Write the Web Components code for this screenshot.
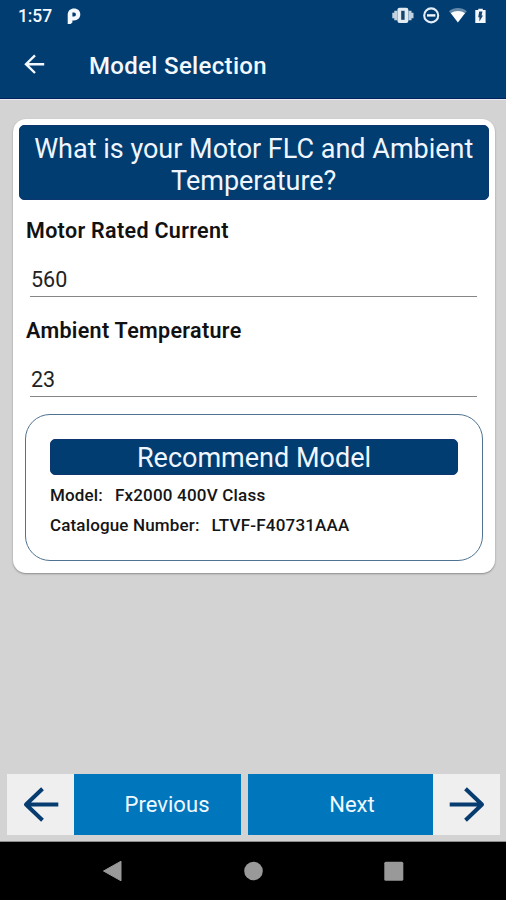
<!DOCTYPE html>
<html lang="en">
<head>
<meta charset="UTF-8">
<meta name="viewport" content="width=device-width, initial-scale=1">
<title>Model Selection</title>
<style>
  :root {
    --navy: #013d70;
    --blue: #0076bd;
    --page: #d3d3d3;
  }
  body {
    margin: 0;
    background: var(--page);
    font-family: Roboto, "Liberation Sans", sans-serif;
  }
</style>
</head>
<body>
<model-app></model-app>

<script>
class StatusBar extends HTMLElement {
  connectedCallback() {
    this.attachShadow({ mode: 'open' });
    this.shadowRoot.innerHTML = `
      <style>
        :host {
          display: flex;
          align-items: center;
          justify-content: space-between;
          height: 32px;
          padding: 0 19px 0 18px;
          background: var(--navy);
          color: #f4f8ff;
        }
        div {
          display: flex;
          align-items: center;
        }
        .time {
          width: 49px;
          font-size: 17.500px;
          line-height: 32px;
          font-weight: 500;
          letter-spacing: -0.1px;
        }
        svg { display: block; }
      </style>
      <div>
        <span class="time">1:57</span>
        <svg width="14" height="17" viewBox="0 0 14 17">
          <path fill="currentColor" fill-rule="evenodd" d="M.7 16V6.500C.9 2.800 3.400.5 7 .5c3.800 0 6.300 2.300 6.300 5.800 0 3.600-2.500 6.100-6.300 6.100H5.400V14.500L3.600 16ZM5.400 4.600V8.500h1.600a1.950 1.950 0 1 0 0-3.900Z"/>
        </svg>
      </div>
      <div>
        <svg width="95" height="18" viewBox="392 7 95 18">
          <path fill="#c3d2e0" d="M392.300 12.700h2v-2h3v9.600h-3v-2h-2zM413.500 12.700h-2v-2h-3v9.600h3v-2h2z"/>
          <rect x="397.400" y="7.800" width="11" height="15.200" rx="2.200" fill="#e2eaf2"/>
          <rect x="401.200" y="10.800" width="3.400" height="9" fill="#17446d"/>
          <circle cx="431.200" cy="15.400" r="7" fill="none" stroke="#e4eef7" stroke-width="2.100"/>
          <path fill="#f4f8ff" d="M427 14.200h8.400v2.400H427z"/>
          <path fill="#668aaa" d="M449 11.300c5.200-4.300 12.600-4.300 17.800 0l-2.300 2.800h-13.200z"/>
          <path fill="#fff" d="M450.800 13.200c4.300-3 9.900-3 14.200 0l-7.100 9.300z"/>
          <path fill="#f4f8ff" d="M478.300 8.700h4.500v1.400h2.800v13h-10.300v-13h3z"/>
          <path fill="#174570" d="M482.400 11.500l-.8 4h1.400l-3.600 6v-4.200h-1.200l1-5.800z"/>
        </svg>
      </div>
    `;
  }
}
customElements.define('status-bar', StatusBar);

class AppHeader extends HTMLElement {
  connectedCallback() {
    this.attachShadow({ mode: 'open' });
    this.shadowRoot.innerHTML = `
      <style>
        :host {
          display: flex;
          align-items: center;
          height: 67px;
          padding: 0 0 1px 23px;
          box-sizing: border-box;
          background: var(--navy);
          border-bottom: 1px solid #02225c;
          color: #f4f8ff;
          box-shadow: 0 1px 0 #e9e9f4;
        }
        svg { display: block; margin-right: 44px; }
        h1 {
          margin: 0;
          font-size: 24px;
          line-height: 28px;
          font-weight: 500;
          letter-spacing: 0.33px;
          white-space: nowrap;
          padding-top: 2px;
        }
      </style>
      <svg width="22" height="22" viewBox="0 0 22 22" fill="none" stroke="currentColor" stroke-width="2.400">
        <path d="M21.200 10.200H3M12 1.400 3 10.200 12 19"/>
      </svg>
      <h1><slot></slot></h1>
    `;
  }
}
customElements.define('app-header', AppHeader);

class TitleBanner extends HTMLElement {
  connectedCallback() {
    this.attachShadow({ mode: 'open' });
    this.shadowRoot.innerHTML = `
      <style>
        :host {
          display: block;
          box-sizing: border-box;
          border: 1px solid #0d3570;
          border-radius: 5px;
          background: var(--navy);
          color: #f0f6ff;
          text-align: center;
          font-size: 27px;
          line-height: 32px;
          white-space: nowrap;
        }
      </style>
      <slot></slot>
    `;
  }
}
customElements.define('title-banner', TitleBanner);

class TextField extends HTMLElement {
  connectedCallback() {
    this.attachShadow({ mode: 'open' });
    this.shadowRoot.innerHTML = `
      <style>
        :host {
          display: block;
          height: 100px;
        }
        .label {
          font-size: 21.500px;
          line-height: 26px;
          font-weight: 600;
          color: #111;
          letter-spacing: 0.32px;
          margin-left: 7px;
        }
        .value {
          margin: 16px 6px 0 11px;
          height: 36px;
          line-height: 39px;
          font-size: 21.500px;
          color: #222;
          border-bottom: 1.500px solid #868686;
          padding-left: 1px;
        }
      </style>
      <div class="label">${this.getAttribute('label')}</div>
      <div class="value">${this.getAttribute('value')}</div>
    `;
  }
}
customElements.define('text-field', TextField);

class ModelResult extends HTMLElement {
  connectedCallback() {
    this.attachShadow({ mode: 'open' });
    this.shadowRoot.innerHTML = `
      <style>
        :host {
          display: block;
          box-sizing: border-box;
          height: 147px;
          margin: -4px 0 0 6px;
          padding: 24px 24px 0 24px;
          border: 1px solid #4f7391;
          border-radius: 25px;
        }
        title-banner {
          height: 36px;
          line-height: 37px;
        }
        dl {
          margin: 5px 0 0;
          display: grid;
          font-size: 17px;
          line-height: 30px;
          font-weight: 500;
          color: #151515;
        }
        .row { display: flex; white-space: nowrap; }
        dt { letter-spacing: 0.15px; }
        dd { margin: 0 0 0 12px; letter-spacing: 0.2px; }
      </style>
      <title-banner>Recommend Model</title-banner>
      <dl>
        <div class="row"><dt>Model:</dt><dd>${this.getAttribute('model')}</dd></div>
        <div class="row"><dt>Catalogue Number:</dt><dd>${this.getAttribute('catalogue')}</dd></div>
      </dl>
    `;
  }
}
customElements.define('model-result', ModelResult);

class QuestionCard extends HTMLElement {
  connectedCallback() {
    this.attachShadow({ mode: 'open' });
    this.shadowRoot.innerHTML = `
      <style>
        :host {
          display: block;
          box-sizing: border-box;
          height: 454px;
          margin: 20px 11px 0 13px;
          padding: 6px 12px 0 6px;
          background: #fff;
          border-radius: 13px;
          box-shadow: 0 1px 2px rgba(0, 0, 0, 0.35);
        }
        ::slotted(title-banner) {
          height: 75px;
          padding-top: 7px;
          margin-right: -5.500px;
          margin-bottom: 18px;
        }
      </style>
      <slot></slot>
    `;
  }
}
customElements.define('question-card', QuestionCard);

class StepButton extends HTMLElement {
  connectedCallback() {
    const next = this.getAttribute('direction') === 'next';
    this.attachShadow({ mode: 'open' });
    this.shadowRoot.innerHTML = `
      <style>
        :host {
          display: flex;
          flex-direction: ${next ? 'row-reverse' : 'row'};
          height: 61px;
        }
        .icon {
          flex: none;
          width: 67px;
          display: flex;
          align-items: center;
          justify-content: center;
          background: #efefef;
        }
        button {
          flex: 1;
          padding: 0 0 0 ${next ? 23 : 19}px;
          border: 0;
          background: var(--blue);
          color: #f0f9ff;
          font: 400 22px/61px Roboto, sans-serif;
          letter-spacing: 0.05px;
        }
        svg { display: block; ${next ? 'transform: scaleX(-1);' : 'margin-left: 1px;'} }
      </style>
      <div class="icon">
        <svg width="36" height="36" viewBox="0 0 36 36" fill="none" stroke="#073c70" stroke-width="4" stroke-linejoin="round">
          <path d="M35.300 17.500H3M19.500 1.800 3 17.500 19.500 33.200"/>
        </svg>
      </div>
      <button><slot></slot></button>
    `;
  }
}
customElements.define('step-button', StepButton);

class SystemNav extends HTMLElement {
  connectedCallback() {
    this.attachShadow({ mode: 'open' });
    this.shadowRoot.innerHTML = `
      <style>
        :host {
          display: flex;
          align-items: center;
          justify-content: space-between;
          box-sizing: border-box;
          height: 58px;
          padding: 0 102px;
          background: #000;
        }
        svg { display: block; }
      </style>
      <svg width="20" height="22" viewBox="0 0 20 22"><path fill="#999" stroke="#999" stroke-linejoin="round" d="M1.500 11 19 1.200v19.600z"/></svg>
      <svg width="20" height="20" viewBox="0 0 20 20"><circle cx="10.500" cy="10" r="9.300" fill="#999"/></svg>
      <svg width="20" height="20" viewBox="0 0 20 20"><rect x=".3" y=".8" width="19" height="19" rx="1.500" fill="#999"/></svg>
    `;
  }
}
customElements.define('system-nav', SystemNav);

class ModelApp extends HTMLElement {
  connectedCallback() {
    this.attachShadow({ mode: 'open' });
    this.shadowRoot.innerHTML = `
      <style>
        :host {
          display: flex;
          flex-direction: column;
          height: 900px;
          overflow: hidden;
        }
        main { flex: 1; }
        .steps {
          display: grid;
          grid-template-columns: 234px 252px;
          column-gap: 7px;
          padding: 0 7px 6px;
          border-bottom: 1px solid #8d8d8d;
        }
      </style>
      <status-bar></status-bar>
      <app-header>Model Selection</app-header>
      <main>
        <question-card>
          <title-banner>What is your Motor FLC and Ambient<br>Temperature?</title-banner>
          <text-field label="Motor Rated Current" value="560"></text-field>
          <text-field label="Ambient Temperature" value="23"></text-field>
          <model-result model="Fx2000 400V Class" catalogue="LTVF-F40731AAA"></model-result>
        </question-card>
      </main>
      <div class="steps">
        <step-button>Previous</step-button>
        <step-button direction="next">Next</step-button>
      </div>
      <system-nav></system-nav>
    `;
  }
}
customElements.define('model-app', ModelApp);
</script>
</body>
</html>
